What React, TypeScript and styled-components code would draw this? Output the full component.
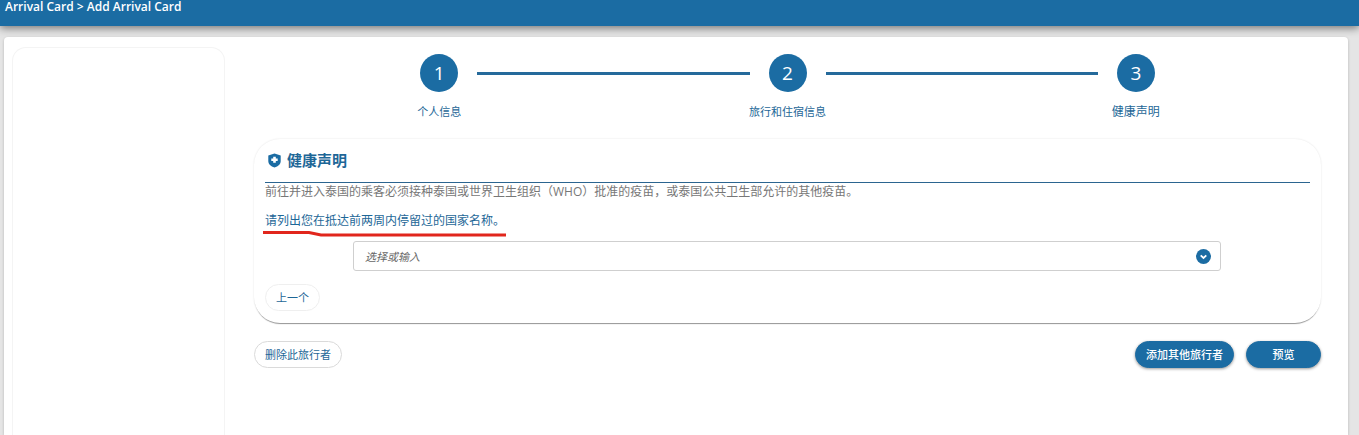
import React from "react";
import styled, { createGlobalStyle, css } from "styled-components";

const blue = "#1b6ca3";
const textBlue = "#1e6797";

const GlobalStyle = createGlobalStyle`
  * { box-sizing: border-box; }
  body {
    margin: 0;
    background: #e5e5e5;
    font-family: "Open Sans", "Noto Sans CJK SC", sans-serif;
    font-size: 12px;
    color: ${textBlue};
  }
  h2, p, ol { margin: 0; padding: 0; }
  button, input { font-family: inherit; }
`;

const Page = styled.div`
  display: flex;
  flex-direction: column;
  min-height: 100vh;
`;

const Header = styled.header`
  height: 26px;
  padding: 0 5px;
  background: ${blue};
  color: #fff;
  font-size: 12px;
  font-weight: 600;
  line-height: 14px;
  box-shadow: 0 2px 8px rgba(0, 0, 0, 0.5);
`;

const Card = styled.div`
  flex: 1;
  display: flex;
  gap: 29px;
  margin: 11px 11px 0 4px;
  padding: 10px 27px 0 8px;
  background: #fff;
  border-radius: 4px 4px 0 0;
  box-shadow: 0 1px 3px rgba(0, 0, 0, 0.2);
`;

const Sidebar = styled.aside`
  flex: 0 0 213px;
  border: 1px solid #f4f4f4;
  border-bottom: 0;
  border-radius: 14px 14px 0 0;
`;

const Content = styled.main`
  flex: 1;
  min-width: 0;
  padding-top: 7px;
`;

const Stepper = styled.ol`
  display: grid;
  grid-template-columns: repeat(3, 1fr);
  margin: 0 11px 18px;
  list-style: none;
`;

const Step = styled.li`
  display: flex;
  flex-direction: column;
  gap: 11px;
  text-align: center;
`;

const StepTrack = styled.div<{ $first?: boolean; $last?: boolean }>`
  display: flex;
  align-items: center;
  gap: 19px;
  &::before,
  &::after {
    content: "";
    flex: 1;
    height: 3px;
    background: #256a9b;
  }
  ${(p) => p.$first && css`&::before { background: none; }`}
  ${(p) => p.$last && css`&::after { background: none; }`}
`;

const StepNumber = styled.span`
  width: 38px;
  height: 38px;
  border-radius: 50%;
  background: ${blue};
  color: #fff;
  font-size: 19px;
  line-height: 38px;
`;

const StepLabel = styled.span<{ $current?: boolean }>`
  font-size: ${(p) => (p.$current ? 12 : 11)}px;
  line-height: 18px;
`;

const Panel = styled.section`
  padding: 12px 11px;
  border-radius: 26px;
  box-shadow: 0 2px 1px -1px rgba(0, 0, 0, 0.4), 0 0 2px rgba(0, 0, 0, 0.12);
`;

const PanelTitle = styled.h2`
  display: flex;
  align-items: center;
  gap: 6px;
  height: 32px;
  padding: 0 0 13px 3px;
  border-bottom: 1px solid #2b6590;
  font-size: 15px;
  line-height: 18px;
`;

const Note = styled.p`
  color: #777;
  line-height: 18px;
`;

const Question = styled.div`
  position: relative;
  width: fit-content;
  margin-top: 11px;
  line-height: 18px;
`;

const Underline = styled.svg`
  position: absolute;
  left: -2px;
  top: 18px;
`;

const Combo = styled.div`
  display: flex;
  align-items: center;
  height: 30px;
  margin: 11px 89px 13px 88px;
  padding: 0 9px 0 11px;
  border: 1px solid #cfcfcf;
  border-radius: 3px;
`;

const ComboInput = styled.input`
  flex: 1;
  min-width: 0;
  padding: 0;
  border: 0;
  outline: 0;
  background: none;
  font-size: 11px;
  &::placeholder {
    color: #666;
    font-style: italic;
    opacity: 1;
  }
`;

const ComboToggle = styled.button`
  display: flex;
  padding: 0;
  border: 0;
  background: none;
`;

const Pill = styled.button<{ $filled?: boolean; $faint?: boolean }>`
  display: block;
  height: 27px;
  padding: 0 10px;
  border: 1px solid ${(p) => (p.$faint ? "#efefef" : "#dadada")};
  border-radius: 14px;
  background: #fff;
  color: ${textBlue};
  font-size: 11px;
  line-height: 25px;
  white-space: nowrap;
  ${(p) =>
    p.$filled &&
    css`
      min-width: 75px;
      border-color: ${blue};
      background: ${blue};
      color: #fff;
      font-weight: 500;
      box-shadow: 0 1px 3px rgba(0, 0, 0, 0.4);
    `}
`;

const Actions = styled.div`
  display: flex;
  gap: 12px;
  margin-top: 18px;
`;

const Spacer = styled.div`
  flex: 1;
`;

const steps = ["个人信息", "旅行和住宿信息", "健康声明"];

export default function App() {
  return (
    <Page>
      <GlobalStyle />
      <Header>Arrival Card &gt; Add Arrival Card</Header>
      <Card>
        <Sidebar />
        <Content>
          <Stepper>
            {steps.map((label, i) => (
              <Step key={label}>
                <StepTrack $first={i === 0} $last={i === steps.length - 1}>
                  <StepNumber>{i + 1}</StepNumber>
                </StepTrack>
                <StepLabel $current={i === steps.length - 1}>{label}</StepLabel>
              </Step>
            ))}
          </Stepper>
          <Panel>
            <PanelTitle>
              <svg width="13" height="15" viewBox="0 0 13 15" aria-hidden="true">
                <path d="M6.5 0.5 12.7 2.4v5.600c0 3.200-2.500 5.300-6.200 6.600C2.800 13.300.3 11.200.3 8V2.400z" fill={blue} />
                <path d="M5.200 3.800h2.600v1.700h1.900v2.600H7.800v1.700H5.200V8.100H3.300V5.500h1.900z" fill="#fff" />
              </svg>
              健康声明
            </PanelTitle>
            <Note>
              前往并进入泰国的乘客必须接种泰国或世界卫生组织（WHO）批准的疫苗，或泰国公共卫生部允许的其他疫苗。
            </Note>
            <Question>
              <label htmlFor="countries">请列出您在抵达前两周内停留过的国家名称。</label>
              <Underline width="244" height="8" viewBox="0 0 244 8" aria-hidden="true">
                <path d="M0 2.500H46L58 5H243" fill="none" stroke="#e1261c" strokeWidth="3" />
              </Underline>
            </Question>
            <Combo>
              <ComboInput id="countries" placeholder="选择或输入" />
              <ComboToggle type="button" aria-label="展开">
                <svg width="15" height="15" viewBox="0 0 15 15" aria-hidden="true">
                  <circle cx="7.5" cy="7.5" r="7.5" fill={blue} />
                  <path d="M4.700 6.400 7.500 9 10.300 6.400" fill="none" stroke="#fff" strokeWidth="1.800" />
                </svg>
              </ComboToggle>
            </Combo>
            <Pill type="button" $faint>上一个</Pill>
          </Panel>
          <Actions>
            <Pill type="button">删除此旅行者</Pill>
            <Spacer />
            <Pill type="button" $filled>添加其他旅行者</Pill>
            <Pill type="button" $filled>预览</Pill>
          </Actions>
        </Content>
      </Card>
    </Page>
  );
}
